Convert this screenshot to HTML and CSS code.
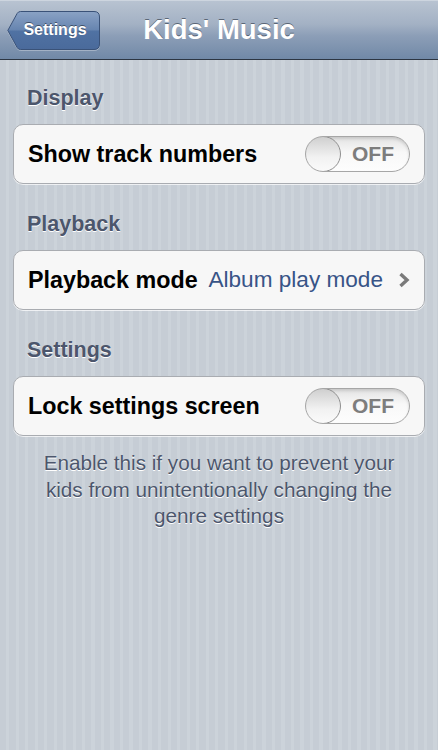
FILE: index.html
```html
<!DOCTYPE html>
<html lang="en">
<head>
    <meta charset="UTF-8">
    <meta name="viewport" content="width=device-width, initial-scale=1.0">
    <title>Kids' Music</title>
    <link rel="stylesheet" href="styles.css">
</head>
<body>

    <div class="navbar">
        <div class="nav-left">
            <a class="back-button" href="#">
                <svg class="back-shape" width="93" height="39" viewBox="0 0 93 39">
                    <defs>
                        <linearGradient id="backFill" x1="0" y1="0" x2="0" y2="1">
                            <stop offset="0" stop-color="#8aa2c5"/>
                            <stop offset="0.48" stop-color="#6785b0"/>
                            <stop offset="0.52" stop-color="#5072a3"/>
                            <stop offset="1" stop-color="#4a6a9b"/>
                        </linearGradient>
                    </defs>
                    <path d="M0.8 19.5 L10.2 2.4 Q11.3 0.5 13.5 0.5 L87 0.5 Q92.5 0.5 92.5 6 L92.5 33 Q92.5 38.5 87 38.5 L13.5 38.5 Q11.3 38.5 10.2 36.6 Z" fill="url(#backFill)" stroke="#3a5278" stroke-width="1"/>
                </svg>
                <span>Settings</span>
            </a>
        </div>
        <h1 class="nav-title">Kids' Music</h1>
        <div class="nav-right"></div>
    </div>

    <div class="content">
        <h2 class="group-header">Display</h2>
        <div class="group">
            <div class="cell">
                <span class="cell-label">Show track numbers</span>
                <div class="switch">
                    <span class="switch-knob"></span>
                    <span class="switch-text">OFF</span>
                </div>
            </div>
        </div>

        <h2 class="group-header">Playback</h2>
        <div class="group">
            <div class="cell">
                <span class="cell-label">Playback mode</span>
                <span class="cell-value">Album play mode</span>
                <svg class="chevron" width="12" height="16" viewBox="0 0 12 16">
                    <path d="M2.5 2 L9 8 L2.5 14" fill="none" stroke="#7a7a7a" stroke-width="3.4" stroke-linejoin="miter"/>
                </svg>
            </div>
        </div>

        <h2 class="group-header">Settings</h2>
        <div class="group">
            <div class="cell">
                <span class="cell-label">Lock settings screen</span>
                <div class="switch">
                    <span class="switch-knob"></span>
                    <span class="switch-text">OFF</span>
                </div>
            </div>
        </div>
        <p class="group-footer">Enable this if you want to prevent your kids from unintentionally changing the genre settings</p>
    </div>

</body>
</html>
```

FILE: styles.css
```css
/* base */
body {
    margin: 0;
    font-family: "Liberation Sans", Arial, sans-serif;
    background-color: #c7ced6;
    background-image: repeating-linear-gradient(90deg, #c6cdd5 0, #c6cdd5 6px, #ccd3da 6px, #ccd3da 9.5px);
    min-height: 750px;
}

/* navigation bar */
.navbar {
    display: grid;
    grid-template-columns: 1fr auto 1fr;
    align-items: center;
    height: 58px;
    background: linear-gradient(to bottom, #b8c3d1 0%, #a3b1c4 40%, #8c9eb7 60%, #7189a7 100%);
    border-top: 1px solid #cdd5df;
    border-bottom: 1px solid #2d3642;
}

.nav-left {
    display: flex;
    align-items: center;
    padding-left: 7px;
}

.back-button {
    position: relative;
    display: flex;
    align-items: center;
    justify-content: center;
    width: 93px;
    height: 39px;
    padding-left: 3px;
    box-sizing: border-box;
    color: #fff;
    font-size: 16px;
    font-weight: bold;
    text-decoration: none;
    text-shadow: 0 -1px 0 rgba(0, 0, 0, 0.45);
}

/* button outline with the arrow tip, drawn under the label */
.back-shape {
    position: absolute;
    left: 0;
    top: 0;
    filter: drop-shadow(0 1px 0 rgba(255, 255, 255, 0.3));
}

.back-button span {
    position: relative;
}

.nav-title {
    margin: 0;
    color: #fff;
    font-size: 27.5px;
    font-weight: bold;
    text-shadow: 0 -1px 0 rgba(40, 50, 65, 0.6);
}

/* grouped table */
.content {
    padding: 26px 13px 0;
}

.group-header {
    margin: 0 0 14px 14px;
    font-size: 21.5px;
    line-height: 24px;
    font-weight: bold;
    color: #4c566c;
    text-shadow: 0 1px 0 #fff;
}

.group {
    background: #f7f7f7;
    border: 1px solid #a9acb1;
    border-radius: 10px;
    box-shadow: 0 1px 0 rgba(255, 255, 255, 0.7);
    margin-bottom: 28px;
}

.cell {
    display: flex;
    align-items: center;
    height: 58px;
    padding: 0 14px;
}

.cell-label {
    flex: 1;
    font-size: 23.3px;
    font-weight: bold;
    color: #000;
}

.cell-value {
    font-size: 22.6px;
    color: #385487;
    margin-right: 15px;
}

.chevron {
    display: block;
}

/* off switch */
.switch {
    display: flex;
    align-items: center;
    width: 105px;
    height: 36px;
    box-sizing: border-box;
    border: 1px solid #a6a6a6;
    border-radius: 18px;
    background: linear-gradient(to bottom, #e3e3e3 0%, #f8f8f8 45%, #fdfdfd 100%);
    box-shadow: inset 0 2px 3px rgba(0, 0, 0, 0.12);
    overflow: hidden;
}

.switch-knob {
    width: 36px;
    height: 36px;
    margin: -1px 0 0 -1px;
    box-sizing: border-box;
    border: 1px solid #8f8f8f;
    border-radius: 50%;
    background: linear-gradient(to bottom, #cfcfcf 0%, #f2f2f2 60%, #fafafa 100%);
    flex-shrink: 0;
}

.switch-text {
    flex: 1;
    text-align: center;
    font-size: 21px;
    font-weight: bold;
    color: #7d7d7d;
    padding-right: 4px;
}

.group-footer {
    margin: -14px 16px 0;
    text-align: center;
    font-size: 20.7px;
    line-height: 26.5px;
    color: #4c566c;
    text-shadow: 0 1px 0 #fff;
}
```
